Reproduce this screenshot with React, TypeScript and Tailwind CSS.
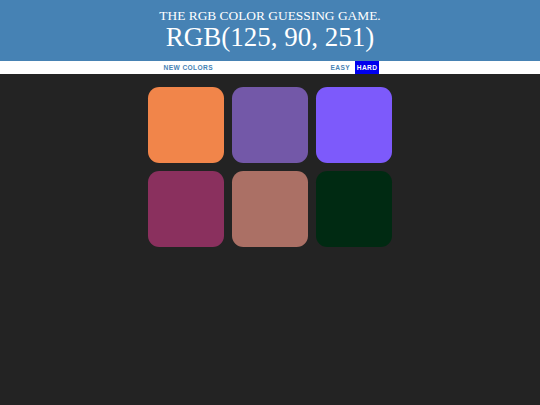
import React from "react";

const colors = [
  "#f1854a",
  "#7358a8",
  "#7d5afb",
  "#8a305e",
  "#ab7065",
  "#002a12",
];

export default function App() {
  return (
    <div className="min-h-[405px] w-full bg-[#232323]">
      <header
        className="h-[61px] bg-[#4682b4] pt-[8px] text-center text-white"
        style={{ fontFamily: '"Liberation Serif", serif' }}
      >
        <div className="text-[13.4px] leading-[15px] uppercase">The RGB Color Guessing Game.</div>
        <div className="text-[27px] leading-[28px]">RGB(125, 90, 251)</div>
      </header>
      <nav
        className="flex h-[13px] items-stretch justify-center bg-white text-[6.6px] font-bold tracking-[0.4px]"
        style={{ fontFamily: '"Liberation Sans", Arial, sans-serif' }}
      >
        <button className="flex items-center px-[3px] uppercase text-[#4682b4]">New Colors</button>
        <span className="w-[112.5px]"></span>
        <button className="flex items-center px-[2px] uppercase text-[#4682b4]">Easy</button>
        <span className="w-[2.7px]"></span>
        <button className="flex items-center bg-[#0000ee] px-[2px] uppercase text-white">Hard</button>
      </nav>
      <div className="mx-auto mt-[13.3px] grid w-[243.6px] grid-cols-3 gap-[8.4px]">
        {colors.map((c, i) => (
          <div key={i} className="aspect-square rounded-[15%]" style={{ backgroundColor: c }} />
        ))}
      </div>
    </div>
  );
}
